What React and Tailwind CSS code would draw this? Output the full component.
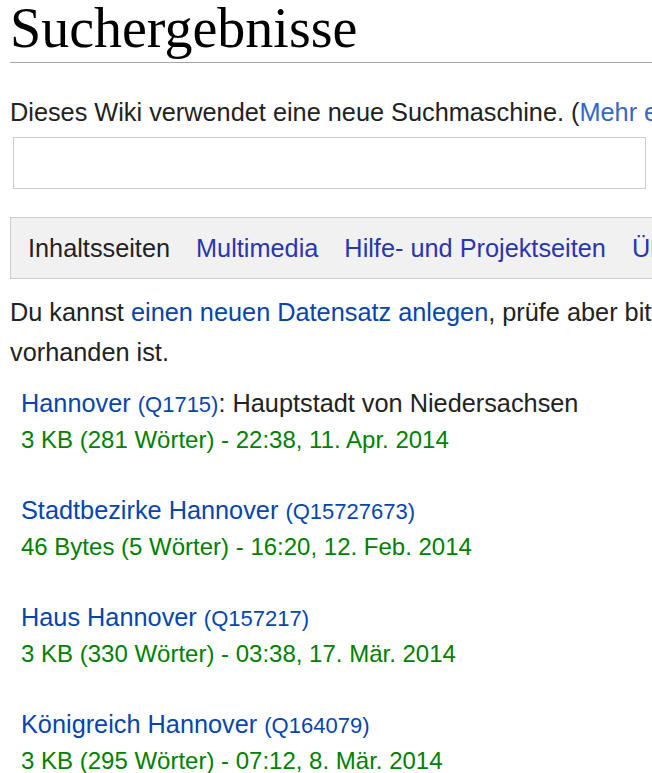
const results = [
  {
    title: "Hannover",
    id: "Q1715",
    desc: "Hauptstadt von Niedersachsen",
    meta: "3 KB (281 Wörter) - 22:38, 11. Apr. 2014",
  },
  {
    title: "Stadtbezirke Hannover",
    id: "Q15727673",
    meta: "46 Bytes (5 Wörter) - 16:20, 12. Feb. 2014",
  },
  {
    title: "Haus Hannover",
    id: "Q157217",
    meta: "3 KB (330 Wörter) - 03:38, 17. Mär. 2014",
  },
  {
    title: "Königreich Hannover",
    id: "Q164079",
    meta: "3 KB (295 Wörter) - 07:12, 8. Mär. 2014",
  },
];

const App = () => {
  return (
    <div className="w-[652px] h-[773px] overflow-hidden bg-white text-[#222] font-['Liberation_Sans',Arial,sans-serif] text-[25.3px]">
      <div className="w-[1000px] pl-[10px]">
        {/* heading */}
        <h1 className="-mt-[3px] pb-[3px] border-b border-[#a2a9b1] font-['Liberation_Serif',serif] text-[56px] leading-[62px] text-black">
          Suchergebnisse
        </h1>

        <p className="mt-[29px] leading-[40px] whitespace-nowrap">
          Dieses Wiki verwendet eine neue Suchmaschine. (
          <span className="text-[#3366cc]">Mehr erfahren</span>)
        </p>

        <div className="mt-[5px] ml-[3px] w-[633px] h-[52px] border border-[#c8ccd1] bg-white"></div>

        {/* tabs */}
        <div className="mt-[28px] h-[62px] flex items-center gap-[26px] pl-[17px] bg-[#f1f1f1] border border-[#c8ccd1] leading-[40px] whitespace-nowrap">
          <span className="text-[#222]">Inhaltsseiten</span>
          <span className="text-[#2a35b0]">Multimedia</span>
          <span className="text-[#2a35b0]">Hilfe- und Projektseiten</span>
          <span className="text-[#2a35b0]">Übersetzungen</span>
        </div>

        <p className="mt-[13px] leading-[40px] whitespace-nowrap">
          Du kannst <span className="text-[#0645ad]">einen neuen Datensatz anlegen</span>, prüfe aber bitte zuerst, ob er schon
          <br />
          vorhanden ist.
        </p>

        {/* results */}
        <ul className="mt-[14px] ml-[11px]">
          {results.map((r) => (
            <li key={r.id} className="mb-[36px] leading-[35px] whitespace-nowrap">
              <div>
                <span className="text-[#0645ad]">{r.title}</span>{" "}
                <span className="text-[#0645ad] text-[22px]">({r.id})</span>
                {r.desc && <span>: {r.desc}</span>}
              </div>
              <div className="text-[#008000] text-[24px]">{r.meta}</div>
            </li>
          ))}
        </ul>
      </div>
    </div>
  );
};

export default App;
